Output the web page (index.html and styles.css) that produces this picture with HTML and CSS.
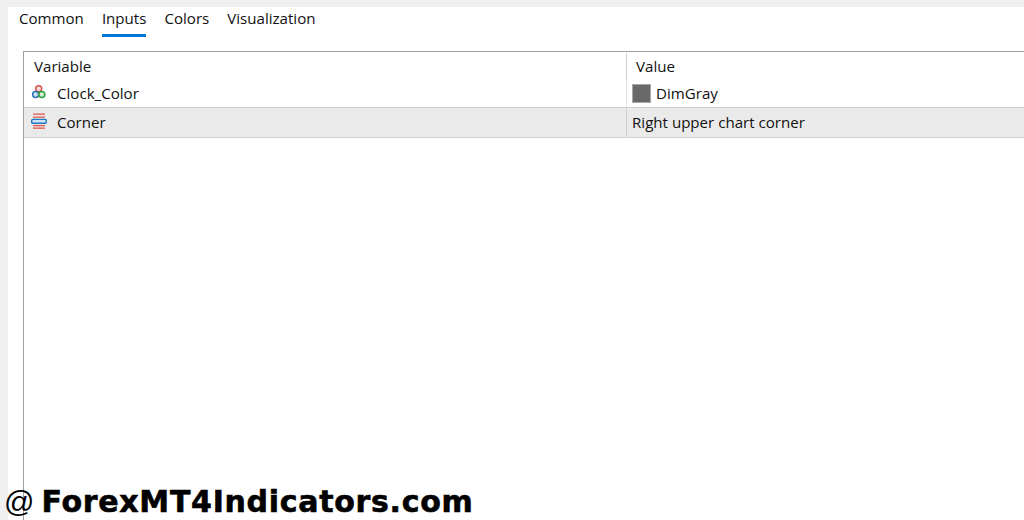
FILE: index.html
```html
<!DOCTYPE html>
<html lang="en">
<head>
<meta charset="utf-8">
<title>Inputs</title>
<link rel="stylesheet" href="styles.css">
</head>
<body>
<main class="panel">
  <nav class="tabs">
    <span class="tab">Common</span>
    <span class="tab active">Inputs</span>
    <span class="tab">Colors</span>
    <span class="tab">Visualization</span>
  </nav>
  <section class="table">
    <div class="row head">
      <div class="cell name"><span class="txt">Variable</span></div>
      <div class="cell value"><span class="txt">Value</span></div>
    </div>
    <div class="row first">
      <div class="cell name">
        <svg class="icon color" width="16" height="16" viewBox="0 0 16 16" fill="none" stroke-width="1.5">
          <circle cx="7.7" cy="4.8" r="3" fill="#f8dcd8" stroke="#d9534a"/>
          <circle cx="4.6" cy="10.6" r="3" fill="#cfe0f2" stroke="#2a6fb5"/>
          <circle cx="10.8" cy="10.6" r="3" fill="#d4efd4" stroke="#27a03c"/>
        </svg>
        <span class="txt">Clock_Color</span>
      </div>
      <div class="cell value">
        <span class="swatch"></span>
        <span class="txt">DimGray</span>
      </div>
    </div>
    <div class="row selected">
      <div class="cell name">
        <svg class="icon enum" width="16" height="16" viewBox="0 0 16 16" fill="none">
          <path d="M2 1.2h12M2 4.2h12M2 12.6h12M2 15.2h12" stroke="#e0524a" stroke-width="1.3"/>
          <rect x="0.7" y="6.4" width="14.6" height="3.8" rx="1" fill="#cfe3f5" stroke="#1f78c1" stroke-width="1.4"/>
        </svg>
        <span class="txt">Corner</span>
      </div>
      <div class="cell value"><span class="txt">Right upper chart corner</span></div>
    </div>
  </section>
</main>
<div class="watermark"><span class="at">@</span> <span class="brand">ForexMT4Indicators.com</span></div>
</body>
</html>
```
FILE: styles.css
```css
* { box-sizing: border-box; }
html, body { height: 100%; }
body {
  margin: 0;
  height: 520px;
  overflow: hidden;
  background: #f0f0f0;
  padding: 7px 0 0 8px;
  font-family: "Open Sans", "Noto Sans", sans-serif;
  font-size: 15.1px;
  color: #111;
}
.panel {
  height: 513px;
  background: #fff;
  padding: 0 0 0 15px;
  display: flex;
  flex-direction: column;
}
.tabs {
  display: flex;
  gap: 18px;
  height: 44px;
  margin-left: -4px;
}
.tab {
  height: 30px;
  padding-top: 1px;
  line-height: 21px;
}
.tab.active { border-bottom: 3px solid #0078d7; }
.table {
  flex: 1;
  border: 1px solid #a0a0a0;
  border-right: 0;
  border-bottom: 0;
}
.row {
  display: grid;
  grid-template-columns: 602px 1fr;
}
.head { height: 28px; padding-top: 1px; }
.head .name { padding-left: 10px; }
.head .value { padding-left: 9px; border-left: 1px solid #d0d0d0; }
.first { height: 28px; border-bottom: 1px solid #cfcfcf; }
.first .value { border-left: 1px solid #e3e3e3; padding-left: 5px; }
.selected {
  height: 30px;
  background: #eaeaea;
  border-bottom: 1px solid #d0d0d0;
}
.selected .value { border-left: 1px solid #d0d0d0; padding-left: 5px; }
.cell {
  display: flex;
  align-items: center;
  min-width: 0;
  white-space: nowrap;
}
.txt { margin-bottom: 2px; }
.name { padding-left: 7px; }
.icon { margin-right: 10px; flex: none; }
.color { margin-bottom: 4px; }
.enum { margin-bottom: 3px; }
.swatch {
  width: 19px;
  height: 19px;
  background: #696969;
  border: 1px solid #a8a8a8;
  margin-right: 5px;
}
.watermark {
  position: absolute;
  left: 4px;
  top: 483px;
  color: #000;
  font-size: 30px;
  line-height: 38px;
  white-space: nowrap;
  display: flex;
  gap: 7px;
}
.at { font-family: "Liberation Sans", Arial, sans-serif; }
.brand {
  font-family: "DejaVu Sans", Verdana, sans-serif;
  font-weight: 700;
  letter-spacing: 0.7px;
  -webkit-text-stroke: 0.6px #000;
}
```
